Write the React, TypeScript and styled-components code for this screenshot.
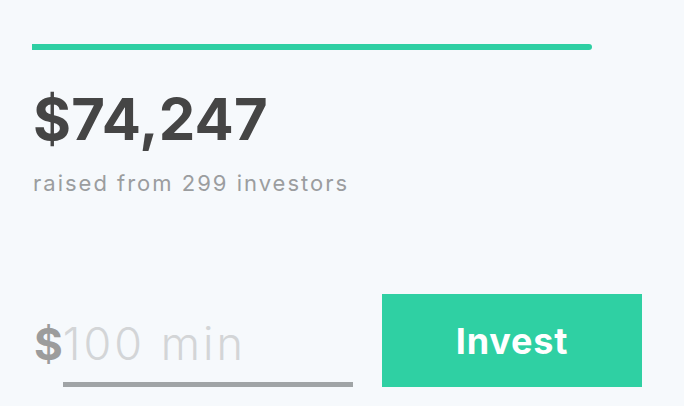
import styled, { createGlobalStyle } from "styled-components";

const GlobalStyle = createGlobalStyle`
  html, body {
    margin: 0;
    padding: 0;
    background: #f6f9fc;
  }
  body {
    font-family: "Inter", "Lato", sans-serif;
  }
`;

interface ProgressProps {
  percent: number;
}

const Container = styled.div`
  width: 684px;
  height: 406px;
  box-sizing: border-box;
  padding: 44px 42px 0 32px;
  display: flex;
  flex-direction: column;
`;

const Track = styled.div`
  width: 560px;
  height: 6px;
`;

const Fill = styled.div<ProgressProps>`
  height: 100%;
  width: ${(p) => p.percent}%;
  background: #2ecfa3;
  border-radius: 0 3px 3px 0;
`;

const Amount = styled.div`
  margin-top: 34px;
  margin-left: 1px;
  font-size: 58px;
  font-weight: 700;
  color: #454545;
  line-height: 70px;
  letter-spacing: 0.2px;
`;

const Caption = styled.div`
  margin-top: 16px;
  margin-left: 1px;
  font-size: 22px;
  font-weight: 400;
  color: #9b9d9f;
  line-height: 26px;
  letter-spacing: 2px;
`;

const Row = styled.div`
  margin-top: 98px;
  display: flex;
  align-items: flex-start;
  justify-content: space-between;
`;

const Field = styled.label`
  display: flex;
  align-items: baseline;
  padding-top: 22px;
`;

const Currency = styled.span`
  font-size: 44px;
  font-weight: 700;
  color: #9c9c9c;
  line-height: 56px;
  margin-left: 2px;
`;

const InputWrap = styled.div`
  width: 290px;
  border-bottom: 5px solid #a0a4a6;
  padding-bottom: 10px;
`;

const AmountInput = styled.input`
  width: 100%;
  border: none;
  background: transparent;
  outline: none;
  padding: 0;
  font-family: "Inter", "Lato", sans-serif;
  font-size: 45px;
  font-weight: 300;
  line-height: 56px;
  height: 56px;
  color: #444;
  letter-spacing: 3px;
  &::placeholder {
    color: #d3d5d7;
  }
`;

const InvestButton = styled.button`
  width: 260px;
  height: 93px;
  border: none;
  background: #2fd0a3;
  color: #fff;
  font-family: "Inter", "Lato", sans-serif;
  font-size: 36px;
  font-weight: 700;
  letter-spacing: 0.8px;
  cursor: pointer;
`;

export default function App() {
  return (
    <>
      <GlobalStyle />
      <Container>
        <Track>
          <Fill percent={100} />
        </Track>
        <Amount>$74,247</Amount>
        <Caption>raised from 299 investors</Caption>
        <Row>
          <Field>
            <Currency>$</Currency>
            <InputWrap>
              <AmountInput placeholder="100 min" />
            </InputWrap>
          </Field>
          <InvestButton>Invest</InvestButton>
        </Row>
      </Container>
    </>
  );
}
